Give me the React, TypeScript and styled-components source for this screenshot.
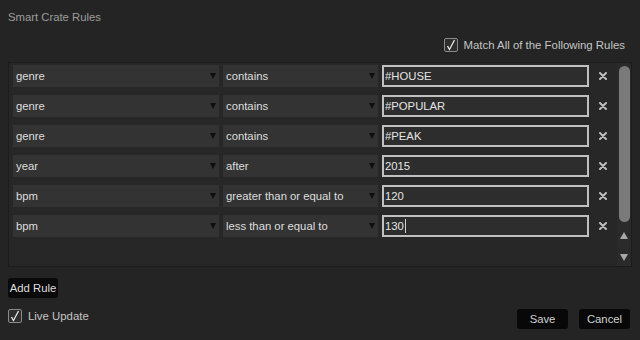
import React from "react";
import styled, { createGlobalStyle } from "styled-components";

const Global = createGlobalStyle`
  html, body { margin: 0; padding: 0; background: #242424; }
  body { font-family: "Liberation Sans", Arial, sans-serif; font-size: 11.3px; }
`;

const Page = styled.div`
  width: 640px;
  height: 340px;
  box-sizing: border-box;
  background: #242424;
  display: flex;
  flex-direction: column;
  padding: 10px 8px 0 8px;
  overflow: hidden;
`;

const Title = styled.div`
  color: #9c9c9c;
  font-size: 11.3px;
  line-height: 14px;
  height: 14px;
`;

const HeaderRow = styled.div`
  display: flex;
  justify-content: flex-end;
  margin-top: 13px;
  padding-right: 7px;
  height: 16px;
`;

const CheckLabel = styled.label`
  display: flex;
  align-items: center;
  gap: 6px;
  color: #c4c4c4;
  font-size: 11.4px;
  line-height: 14px;
`;

const Box = styled.span`
  width: 14px;
  height: 14px;
  box-sizing: border-box;
  border: 1px solid #8a8a8a;
  border-radius: 2px;
  background: #2e2e2e;
  display: flex;
  align-items: center;
  justify-content: center;
`;

const Panel = styled.div`
  margin-top: 9px;
  height: 205px;
  box-sizing: border-box;
  border: 1px solid #1c1c1c;
  background: #272727;
  display: flex;
`;

const Rows = styled.div`
  flex: 1;
  display: flex;
  flex-direction: column;
  gap: 8px;
  padding: 2px 0 0 4px;
`;

const Row = styled.div`
  display: grid;
  grid-template-columns: 206px 155px 207px 24px;
  column-gap: 4px;
  height: 22px;
  align-items: stretch;
`;

const Select = styled.div`
  background: #333333;
  display: flex;
  align-items: center;
  justify-content: space-between;
  padding: 0 2px 0 3px;
  color: #dedede;
  font-size: 11.3px;
`;

const Arrow = styled.span`
  width: 0;
  height: 0;
  border-left: 3px solid transparent;
  border-right: 3px solid transparent;
  border-top: 6px solid #0e0e0e;
  margin-right: 1px;
`;

const Input = styled.div`
  box-sizing: border-box;
  border: 2px solid #c0c0c0;
  background: #2d2d2d;
  color: #e4e4e4;
  display: flex;
  align-items: center;
  padding-left: 1px;
  font-size: 11.3px;
`;

const Caret = styled.span`
  width: 1px;
  height: 14px;
  background: #d0d0d0;
  margin-left: 1px;
`;

const Remove = styled.div`
  display: flex;
  align-items: center;
  justify-content: center;
  padding-right: 4px;
`;

const Scrollbar = styled.div`
  width: 14px;
  background: #2a2a2a;
  display: flex;
  flex-direction: column;
  align-items: center;
  padding-top: 3px;
`;

const Thumb = styled.div`
  width: 11px;
  height: 156px;
  border-radius: 6px;
  background: #7a7a7a;
`;

const ArrowBtn = styled.div<{ $down?: boolean }>`
  width: 0;
  height: 0;
  border-left: 4px solid transparent;
  border-right: 4px solid transparent;
  ${(p) =>
    p.$down
      ? "border-top: 7px solid #a8a8a8; margin-top: 15px;"
      : "border-bottom: 7px solid #a8a8a8; margin-top: 10px;"}
`;

const AddButton = styled.div`
  margin-top: 11px;
  width: 50px;
  height: 20px;
  border-radius: 3px;
  background: #0a0a0a;
  color: #dedede;
  font-size: 11.3px;
  display: flex;
  align-items: center;
  justify-content: center;
`;

const Footer = styled.div`
  display: flex;
  justify-content: space-between;
  align-items: flex-start;
  margin-top: 11px;
`;

const Buttons = styled.div`
  display: flex;
  gap: 11px;
  margin-right: 2px;
`;

const Button = styled.div`
  width: 51px;
  height: 20px;
  border-radius: 3px;
  background: #080808;
  color: #d2d2d2;
  font-size: 11.3px;
  display: flex;
  align-items: center;
  justify-content: center;
`;

const Check = () => (
  <Box>
    <svg width="12" height="12" viewBox="0 0 12 12">
      <path d="M2.5 7 L4.5 10.5 L9.5 1" stroke="#e8e8e8" strokeWidth="1.3" fill="none" />
    </svg>
  </Box>
);

const XIcon = () => (
  <svg width="8" height="8" viewBox="0 0 8 8">
    <path d="M1 1 L7 7 M7 1 L1 7" stroke="#bdbdbd" strokeWidth="2" strokeLinecap="round" />
  </svg>
);

const rules = [
  { field: "genre", op: "contains", value: "#HOUSE" },
  { field: "genre", op: "contains", value: "#POPULAR" },
  { field: "genre", op: "contains", value: "#PEAK" },
  { field: "year", op: "after", value: "2015" },
  { field: "bpm", op: "greater than or equal to", value: "120" },
  { field: "bpm", op: "less than or equal to", value: "130", focused: true },
];

export default function App() {
  return (
    <>
      <Global />
      <Page>
        <Title>Smart Crate Rules</Title>
        <HeaderRow>
          <CheckLabel>
            <Check />
            Match All of the Following Rules
          </CheckLabel>
        </HeaderRow>
        <Panel>
          <Rows>
            {rules.map((r, i) => (
              <Row key={i}>
                <Select>
                  {r.field}
                  <Arrow />
                </Select>
                <Select>
                  {r.op}
                  <Arrow />
                </Select>
                <Input>
                  {r.value}
                  {r.focused && <Caret />}
                </Input>
                <Remove>
                  <XIcon />
                </Remove>
              </Row>
            ))}
          </Rows>
          <Scrollbar>
            <Thumb />
            <ArrowBtn />
            <ArrowBtn $down />
          </Scrollbar>
        </Panel>
        <AddButton>Add Rule</AddButton>
        <Footer>
          <CheckLabel>
            <Check />
            Live Update
          </CheckLabel>
          <Buttons>
            <Button>Save</Button>
            <Button>Cancel</Button>
          </Buttons>
        </Footer>
      </Page>
    </>
  );
}
